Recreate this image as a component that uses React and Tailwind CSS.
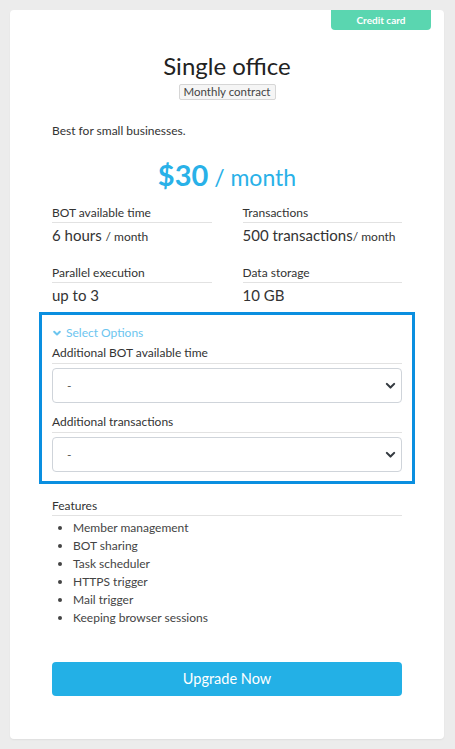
import { useState } from "react";

const font = { fontFamily: "Lato, 'Noto Sans', sans-serif" };

function Chevron({ className, width = "2.6" }) {
  return (
    <svg viewBox="0 0 16 16" className={className} fill="none" stroke="currentColor" strokeWidth={width} strokeLinecap="round" strokeLinejoin="round">
      <path d="M3.5 6 8 10.5 12.5 6" />
    </svg>
  );
}

function Spec({ label, value, unit }) {
  return (
    <div>
      <div className="text-[12px] text-[#333] pb-[1px] border-b border-[#e2e2e2] leading-[16px]">{label}</div>
      <div className="mt-[2px] text-[15px] text-[#333] leading-[20px] whitespace-nowrap">
        {value}
        {unit && <span className="text-[12px]">{unit}</span>}
      </div>
    </div>
  );
}

function OptionSelect({ label, value, onChange }) {
  return (
    <div>
      <div className="text-[12px] text-[#333] pb-[2px] border-b border-[#e2e2e2] leading-[16px]">{label}</div>
      <div className="relative mt-[4px]">
        <select
          value={value}
          onChange={(e) => onChange(e.target.value)}
          className="w-full h-[35px] appearance-none rounded-[4px] border border-[#cfd4da] bg-white pl-[14px] text-[12px] text-[#555] outline-none"
          style={font}
        >
          <option value="">-</option>
          <option value="1">+1</option>
        </select>
        <Chevron className="absolute right-[5px] top-[11px] w-[13px] h-[13px] text-[#343a40] pointer-events-none" />
      </div>
    </div>
  );
}

export default function App() {
  const [botTime, setBotTime] = useState("");
  const [tx, setTx] = useState("");

  const features = [
    "Member management",
    "BOT sharing",
    "Task scheduler",
    "HTTPS trigger",
    "Mail trigger",
    "Keeping browser sessions",
  ];

  return (
    <div className="min-h-[749px] bg-[#ececec] p-[10px] pr-[11px]" style={font}>
      <div className="relative bg-white rounded-[4px] h-[729px] shadow-[0_1px_2px_rgba(0,0,0,0.06)] px-[42px]">
        <div className="absolute right-[13px] top-0 w-[100px] h-[20px] bg-[#5ad6b0] rounded-b-[4px] text-white text-[10px] font-bold flex items-center justify-center">
          Credit card
        </div>

        <div className="pt-[41px] flex flex-col items-center">
          <h1 className="text-[24px] text-[#222] leading-[30px]">Single office</h1>
          <span className="mt-[3px] text-[11.5px] text-[#444] border border-[#d6d6d6] bg-[#f5f5f5] rounded-[2px] px-[4px] leading-[14px]">
            Monthly contract
          </span>
        </div>

        <p className="mt-[23px] text-[12px] text-[#333] leading-[16px]">Best for small businesses.</p>

        <div className="mt-[17px] text-center text-[#29b1e8] leading-[38px]">
          <span className="text-[29px] font-bold">$30</span>
          <span className="text-[23px]"> / month</span>
        </div>

        <div className="mt-[6px] grid grid-cols-2 gap-x-[31px] gap-y-[18px]">
          <Spec label="BOT available time" value="6 hours " unit="/ month" />
          <Spec label="Transactions" value="500 transactions" unit="/ month" />
          <Spec label="Parallel execution" value="up to 3" />
          <Spec label="Data storage" value="10 GB" />
        </div>

        <div className="mt-[7px] -mx-[13px] border-[3px] border-[#0a8fe0] px-[10px] pt-[10px] pb-[9px] flex flex-col gap-[11px]">
          <div className="flex items-center gap-[4px] text-[12px] text-[#6cc5ef] leading-[16px] -mb-[7px]">
            <Chevron className="w-[10px] h-[10px]" width="3.2" />
            Select Options
          </div>
          <OptionSelect label="Additional BOT available time" value={botTime} onChange={setBotTime} />
          <OptionSelect label="Additional transactions" value={tx} onChange={setTx} />
        </div>

        <div className="mt-[14px] text-[12px] text-[#333] pb-[1px] border-b border-[#e2e2e2] leading-[16px]">Features</div>
        <ul className="mt-[3px] list-disc pl-[21px] text-[12px] text-[#444] leading-[18px]">
          {features.map((f) => (
            <li key={f}>{f}</li>
          ))}
        </ul>

        <button className="mt-[35px] w-full h-[34px] bg-[#23b0e6] rounded-[4px] text-white text-[14.5px]">
          Upgrade Now
        </button>
      </div>
    </div>
  );
}
